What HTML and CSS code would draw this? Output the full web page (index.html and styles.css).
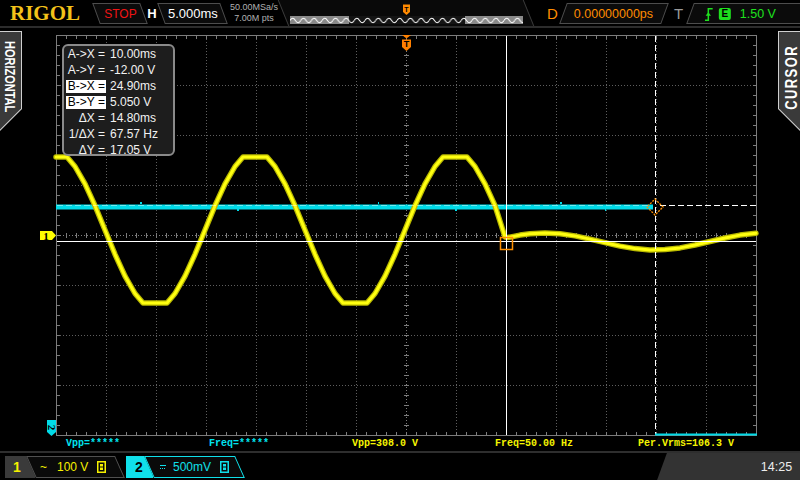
FILE: index.html
```html
<!DOCTYPE html>
<html>
<head>
<meta charset="utf-8">
<title>RIGOL</title>
<link rel="stylesheet" href="styles.css">
</head>
<body>
<div class="scope">
  <header class="topbar">
    <div class="logo">RIGOL</div>
    <div class="pbox pl stop"><span>STOP</span></div>
    <div class="hlab">H</div>
    <div class="pbox pl tbase"><span>5.000ms</span></div>
    <div class="rate"><div>50.00MSa/s</div><div>7.00M pts</div></div>
    <div class="memframe">
      <svg class="memsvg" viewBox="280 0 252 26" width="252" height="26">
        <defs>
          <pattern id="mw" patternUnits="userSpaceOnUse" x="290" y="16" width="10.7" height="8">
            <path d="M0 4.5 Q2.675 0 5.35 4.5 T10.7 4.5" stroke="#fff" stroke-width="1" fill="none"/>
          </pattern>
        </defs>
        <rect x="290" y="16" width="233" height="8" fill="#8a8a8a"/>
        <rect x="349" y="16" width="116" height="8" fill="#141414"/>
        <rect x="290" y="16" width="233" height="8" fill="url(#mw)"/>
        <path d="M403 4.5H410V12L406.5 15L403 12Z" fill="#ff8a00"/>
        <text x="406.5" y="11.5" class="tmark">T</text>
      </svg>
    </div>
    <div class="dlab">D</div>
    <div class="pbox pr dbox"><span>0.00000000ps</span></div>
    <div class="tlab">T</div>
    <div class="pbox pr tbox">
      <div class="trig">
        <svg width="8" height="13" viewBox="0 0 8 13"><path d="M0 12.3H3.5V0.7H8" stroke="#1ee01e" stroke-width="1.5" fill="none"/><path d="M0.8 7.8L3.5 4.3L6.2 7.8Z" fill="#1ee01e"/></svg>
        <span class="ebox">E</span>
        <span class="tlev">1.50 V</span>
      </div>
    </div>
  </header>

  <main class="middle">
    <div class="side side-l">
      <div class="tab tab-l"><div class="tab-in"><span class="tab-txt">HORIZONTAL</span></div></div>
    </div>

    <div class="screen">
      <svg class="canvas" viewBox="22 28 756 409" width="756" height="409">
        <!-- grid -->
        <g fill="none" stroke="#5e5e5e" stroke-dasharray="1 2">
          <path d="M106.5 36V435M156.5 36V435M206.5 36V435M256.5 36V435M306.5 36V435M356.5 36V435M456.5 36V435M506.5 36V435M556.5 36V435M606.5 36V435M656.5 36V435M706.5 36V435"/>
          <path d="M57 85.5H756M57 135.5H756M57 185.5H756M57 285.5H756M57 335.5H756M57 385.5H756"/>
        </g>
        <g fill="none" stroke="#7c7c7c">
          <path d="M57 235.5H756M406.5 36V435" stroke-dasharray="1 2"/>
          <path d="M56 235.5H757" stroke-width="5" stroke-dasharray="1 9"/>
          <path d="M406.5 35V436" stroke-width="5" stroke-dasharray="1 9"/>
          <path d="M56 37H757M56 434H757" stroke-width="4" stroke-dasharray="1 9"/>
          <path d="M58 35V436M755 35V436" stroke-width="4" stroke-dasharray="1 9"/>
          <rect x="56.5" y="35.5" width="700" height="400"/>
        </g>

        <!-- channel 2 trace -->
        <path d="M56 207H653" stroke="#00dbe8" stroke-width="5" fill="none"/>
        <path d="M140 204h2v-2h-2zM237 209h2v2h-2zM378 204h1v-2h-1zM455 209h2v2h-2zM560 204h2v-2h-2zM605 209h1v2h-1z" fill="#00dbe8"/>

        <!-- channel 1 trace -->
        <g fill="none" stroke-linejoin="round" stroke-linecap="round">
          <path stroke="#b8b800" stroke-width="5.5" d="M56 157L67 157L75 166.5L85 183.9L95 205.7L105 230L115 254.3L125 276.1L135 293.5L143 303L167 303L175 293.5L185 276.1L195 254.3L205 230L215 205.7L225 183.9L235 166.5L243 157L267 157L275 166.5L285 183.9L295 205.7L305 230L315 254.3L325 276.1L335 293.5L343 303L367 303L375 293.5L385 276.1L395 254.3L405 230L415 205.7L425 183.9L435 166.5L443 157L467 157L475 166.5L485 183.9L495 205.7L505 237L508 237.5L520 235.1L530 233.8L545 233L560 233.8L575 235.9L590 239.1L605 242.7L620 246.1L635 248.6L650 249.9L665 249.6L680 247.9L695 245L710 241.5L725 238L740 235.1L756 233.3"/>
          <path stroke="#ffff10" stroke-width="3" d="M56 157L67 157L75 166.5L85 183.9L95 205.7L105 230L115 254.3L125 276.1L135 293.5L143 303L167 303L175 293.5L185 276.1L195 254.3L205 230L215 205.7L225 183.9L235 166.5L243 157L267 157L275 166.5L285 183.9L295 205.7L305 230L315 254.3L325 276.1L335 293.5L343 303L367 303L375 293.5L385 276.1L395 254.3L405 230L415 205.7L425 183.9L435 166.5L443 157L467 157L475 166.5L485 183.9L495 205.7L505 237L508 237.5L520 235.1L530 233.8L545 233L560 233.8L575 235.9L590 239.1L605 242.7L620 246.1L635 248.6L650 249.9L665 249.6L680 247.9L695 245L710 241.5L725 238L740 235.1L756 233.3"/>
        </g>

        <!-- cursors -->
        <g fill="none" stroke="#fff">
          <path d="M506.5 36V435"/>
          <path d="M57 241.5H756"/>
          <path d="M655.5 36V435" stroke-dasharray="6 3"/>
          <path d="M57 205.5H650" stroke-dasharray="6 3" opacity="0.45"/>
          <path d="M660 205.5H756" stroke-dasharray="6 3"/>
        </g>
        <path d="M655 434.5H757" stroke="#00dbe8" stroke-width="2"/>
        <rect x="500.5" y="237.5" width="12" height="12" fill="none" stroke="#ff9000" stroke-width="1.5"/>
        <polygon points="655,199 663,207 655,215 647,207" fill="none" stroke="#ff9000" stroke-width="1.3" stroke-dasharray="2 1.2"/>

        <!-- trigger marker -->
        <polygon points="402,35 411,35 406.5,38.5" fill="#ff8000"/>
        <path d="M402 39.5H411V47L406.5 51L402 47Z" fill="#ff8000"/>
        <text x="406.5" y="46.5" class="tmark2">T</text>

        <!-- channel markers -->
        <polygon points="40,231 52,231 56,235.5 52,240 40,240" fill="#ffff00"/>
        <text x="46" y="239.5" class="chm">1</text>
        <path d="M47 420H56V432L51.5 436L47 432Z" fill="#00dbe8"/>
        <text x="0" y="0" class="chm" transform="translate(48 427.5) rotate(90)">2</text>
      </svg>

      <div class="cbox">
        <span class="lab">A-&gt;X =</span><span>10.00ms</span>
        <span class="lab">A-&gt;Y =</span><span>-12.00 V</span>
        <span class="lab hl">B-&gt;X =</span><span>24.90ms</span>
        <span class="lab hl">B-&gt;Y =</span><span>5.050 V</span>
        <span class="lab">ΔX =</span><span>14.80ms</span>
        <span class="lab">1/ΔX =</span><span>67.57 Hz</span>
        <span class="lab">ΔY =</span><span>17.05 V</span>
      </div>

      <div class="meas">
        <span class="c2">Vpp=*****</span>
        <span class="c2">Freq=*****</span>
        <span class="c1">Vpp=308.0 V</span>
        <span class="c1">Freq=50.00 Hz</span>
        <span class="c1">Per.Vrms=106.3 V</span>
      </div>
    </div>

    <div class="side side-r">
      <div class="tab tab-r"><div class="tab-in"><span class="tab-txt">CURSOR</span></div></div>
    </div>
  </main>

  <footer class="bottombar">
    <div class="ch ch1">
      <div class="ch-num">1</div>
      <div class="ch-box">
        <div class="ch-in">
          <span class="cpl">~</span>
          <span class="scale">100 V</span>
          <svg class="bw" width="9" height="12" viewBox="0 0 9 12"><rect x="0.75" y="0.75" width="7.5" height="10.5" fill="none" stroke="#f5f000" stroke-width="1.5"/><rect x="3" y="3" width="3" height="2.5" fill="#f5f000"/><rect x="3" y="6.5" width="3" height="2.5" fill="#f5f000"/></svg>
        </div>
      </div>
    </div>
    <div class="ch ch2">
      <div class="ch-num">2</div>
      <div class="ch-box">
        <div class="ch-in">
          <svg class="dc" width="6" height="6" viewBox="0 0 6 6"><path d="M0 1.5H6" stroke="#10e0ea" stroke-width="1"/><path d="M0 4.5H6" stroke="#10e0ea" stroke-width="1" stroke-dasharray="1 1"/></svg>
          <span class="scale">500mV</span>
          <svg class="bw" width="9" height="12" viewBox="0 0 9 12"><rect x="0.75" y="0.75" width="7.5" height="10.5" fill="none" stroke="#10e0ea" stroke-width="1.5"/><rect x="3" y="3" width="3" height="2.5" fill="#10e0ea"/><rect x="3" y="6.5" width="3" height="2.5" fill="#10e0ea"/></svg>
        </div>
      </div>
    </div>
    <div class="clock"><span>14:25</span></div>
  </footer>
</div>
</body>
</html>
```
FILE: styles.css
```css
* { box-sizing: border-box; margin: 0; padding: 0; }
html, body { width: 800px; height: 480px; overflow: hidden; background: #000; }
body { font-family: "Liberation Sans", Arial, sans-serif; color: #fff; }

.scope { width: 800px; height: 480px; display: flex; flex-direction: column; overflow: hidden; }

/* ---------- top bar ---------- */
.topbar { height: 28px; flex: none; display: flex; align-items: center; border-bottom: 2px solid #2c2c2c; }
.logo { margin-left: 10px; width: 72px; flex: none; font: bold 21px/26px "Liberation Serif", serif; color: #f3c21a; }
.pbox { height: 21px; flex: none; display: flex; align-items: center; justify-content: center; border: 1px solid #4d4d4d; background: #0b0b0b; white-space: nowrap; }
.pl { transform: skewX(20deg); }
.pl > * { transform: skewX(-20deg); }
.pr { transform: skewX(-20deg); }
.pr > * { transform: skewX(20deg); }
.stop { margin-left: 14px; width: 48px; color: #f01414; font-size: 12px; }
.hlab { margin-left: 3px; width: 10px; flex: none; text-align: center; font: bold 13px/1 "Liberation Sans", Arial, sans-serif; color: #fff; }
.tbase { margin-left: 4px; width: 63px; font-size: 13px; color: #fff; }
.rate { margin-left: 4px; width: 52px; flex: none; text-align: center; font-size: 9px; line-height: 11px; color: #b0b0b0; white-space: nowrap; }
.memframe { width: 252px; height: 26px; flex: none; position: relative; }
.memframe::before { content: ""; position: absolute; top: 0; bottom: 0; left: 3px; right: 3px; transform: skewX(22deg); background: #090909; border-left: 1px solid #3c3c3c; border-right: 1px solid #3c3c3c; }
.memsvg { position: relative; display: block; }
.tmark { font: bold 7px "Liberation Sans", Arial, sans-serif; fill: #000; text-anchor: middle; }
.dlab { margin-left: 15px; width: 13px; flex: none; color: #ff8c00; font-size: 15px; }
.dbox { margin-left: 3px; width: 102px; color: #ff8c00; font-size: 12.5px; }
.tlab { margin-left: 9px; width: 11px; flex: none; color: #9a9a9a; font-size: 15px; }
.tbox { margin-left: 5px; width: 125px; justify-content: flex-start; padding-left: 14px; }
.trig { display: flex; align-items: center; }
.trig svg { display: block; }
.ebox { margin-left: 6px; width: 12px; height: 12px; border-radius: 2px; background: #1ee01e; color: #000; font: bold 10px/12px "Liberation Sans", Arial, sans-serif; text-align: center; }
.tlev { margin-left: 9px; color: #1ee01e; font-size: 12.5px; }

/* ---------- middle ---------- */
.middle { height: 423px; flex: none; display: flex; }
.side { width: 22px; flex: none; padding-top: 3px; }
.screen { width: 756px; flex: none; position: relative; display: flex; flex-direction: column; }
.canvas { display: block; width: 756px; height: 409px; }
.tmark2 { font: bold 9px "Liberation Sans", Arial, sans-serif; fill: #000; text-anchor: middle; }
.chm { font: bold 11px "Liberation Serif", serif; fill: #000; text-anchor: middle; }

.tab { width: 22px; height: 100px; background: #cfcfcf; }
.tab-in { width: 21px; height: 99px; background: #3a3a3a; display: flex; justify-content: center; align-items: flex-start; }
.tab-l { clip-path: polygon(0 0, 22px 0, 22px 78px, 0 100px); padding: 1px 1px 0 0; }
.tab-l .tab-in { clip-path: polygon(0 0, 21px 0, 21px 76.6px, 0 97.6px); padding-top: 9px; padding-right: 2px; }
.tab-r { clip-path: polygon(0 0, 22px 0, 22px 100px, 0 78px); padding: 1px 0 0 1px; }
.tab-r .tab-in { clip-path: polygon(0 0, 21px 0, 21px 97.6px, 0 76.6px); padding-top: 13px; padding-left: 4px; }
.tab-txt { writing-mode: vertical-rl; font: bold 11px/12px "Liberation Sans", Arial, sans-serif; color: #fff; white-space: nowrap; }
.tab-l .tab-txt { transform: scaleX(1.3); }
.tab-r .tab-txt { transform: rotate(180deg) scaleX(1.2); font-size: 13px; letter-spacing: 1.4px; }

.cbox { position: absolute; left: 40px; top: 16px; width: 113px; height: 112px; border: 2px solid #8a8a8a; border-radius: 6px; background: #1d1d1d; padding: 0 0 0 2px; display: grid; grid-template-columns: 40px auto; column-gap: 4px; align-content: start; font: 12px/16px "Liberation Sans", Arial, sans-serif; color: #f2f2f2; white-space: nowrap; }
.lab { text-align: right; padding-right: 1px; }
.hl { background: linear-gradient(#fff, #fff) center / 100% 13px no-repeat; color: #000; }

.meas { height: 14px; flex: none; display: flex; padding-left: 44px; font: bold 10px/14px "Liberation Mono", monospace; }
.meas span { width: 143px; flex: none; white-space: pre; }
.c2 { color: #00e4f0; }
.c1 { color: #f5f500; }

/* ---------- bottom bar ---------- */
.bottombar { height: 29px; flex: none; display: flex; align-items: center; border-top: 2px solid #2e2e2e; }
.ch { display: flex; height: 22px; flex: none; }
.ch1 { margin-left: 5px; }
.ch2 { margin-left: 6px; }
.ch-num { display: flex; align-items: center; font: bold 14px/1 "Liberation Sans", Arial, sans-serif; }
.ch1 .ch-num { width: 30px; background: #3a3a3a; color: #f5f000; padding-left: 8px; }
.ch2 .ch-num { width: 27px; background: #10e0ea; color: #000; padding-left: 9px; }
.ch-box { margin-left: -4px; transform: skewX(24deg); display: flex; align-items: center; background: #0a0a0a; border: 1px solid #505050; }
.ch1 .ch-box { width: 89px; }
.ch2 .ch-box { width: 91px; border-color: #10e0ea; }
.ch-in { transform: skewX(-24deg); display: flex; align-items: center; font-size: 12px; white-space: nowrap; }
.ch1 .ch-in { padding-left: 8px; color: #f5f000; }
.ch2 .ch-in { padding-left: 10px; color: #10e0ea; }
.cpl { width: 7px; }
.ch1 .scale { margin-left: 10px; }
.ch2 .scale { margin-left: 7px; }
.bw { display: block; margin-left: 9px; }
.dc { display: block; }
.clock { margin-left: auto; margin-right: -7px; width: 145px; align-self: stretch; background: #333; transform: skewX(-20deg); display: flex; align-items: center; justify-content: flex-end; padding-right: 15px; }
.clock span { transform: skewX(20deg); font-size: 12.5px; color: #ececec; }
```
